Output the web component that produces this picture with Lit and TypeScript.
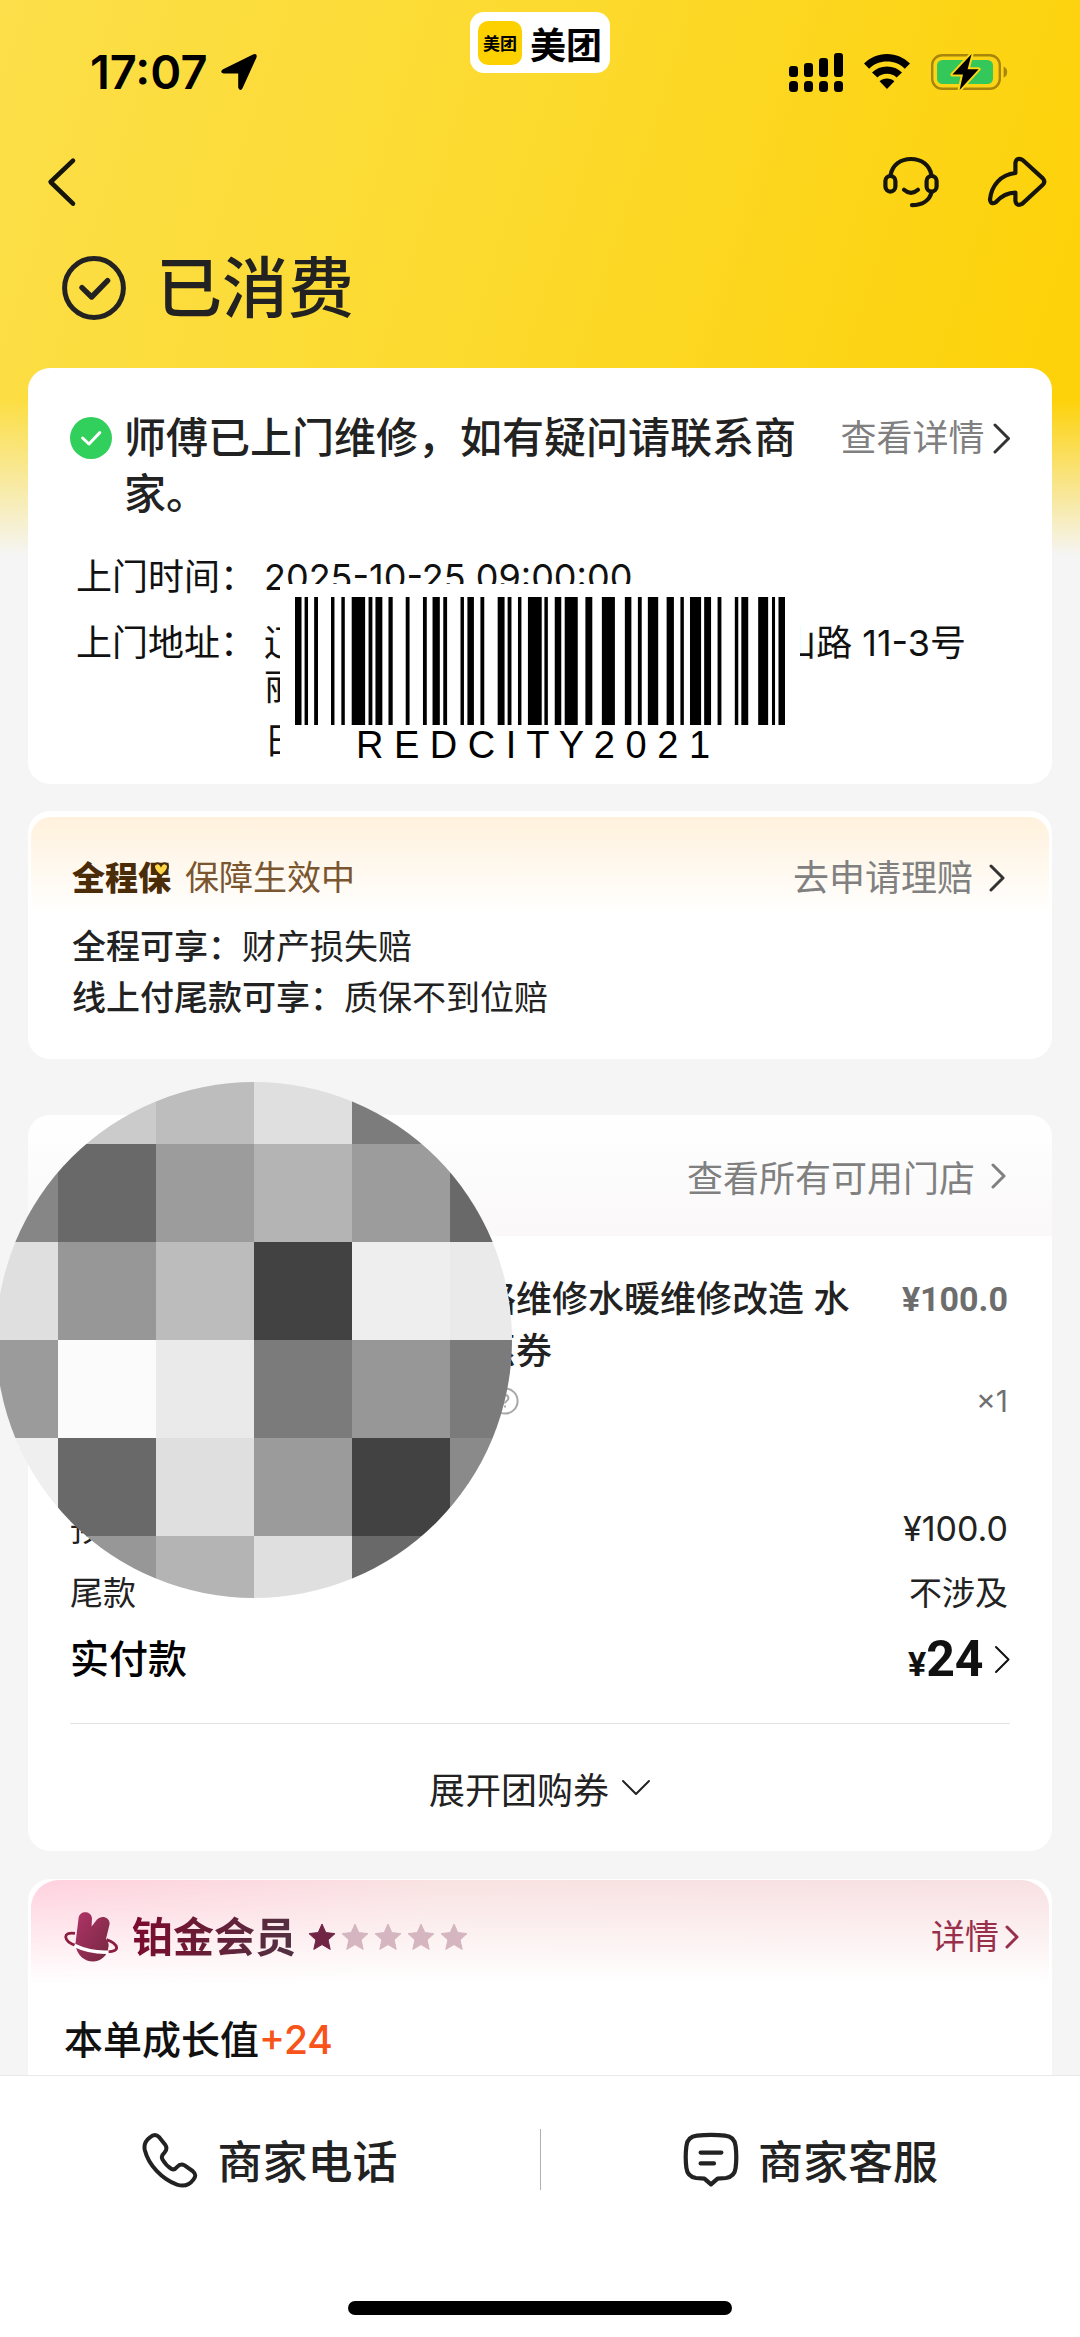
import { LitElement, html, css, svg } from "lit";
import { customElement, property } from "lit/decorators.js";

type Span = [number, number];

/* Start and end of every bar, in barcode units. */
const BARS: Span[] = [
  [0, 17], [25, 34], [50, 60], [94, 103], [121, 130], [148, 183], [192, 202], [210, 228],
  [244, 255], [289, 299], [334, 344], [359, 378], [387, 397], [432, 441], [450, 467], [484, 494],
  [529, 547], [555, 565], [582, 591], [608, 644], [651, 660], [678, 695], [704, 738], [758, 776],
  [801, 835], [861, 878], [895, 905], [921, 948], [970, 989], [1006, 1015], [1031, 1060],
  [1068, 1086], [1103, 1113], [1148, 1157], [1165, 1183], [1209, 1235], [1245, 1253], [1262, 1279],
];

/* Grey tiles of the mosaic disc, row by row. */
const TILES: string[][] = [
  ["#cbcbcb", "#cbcbcb", "#bdbdbd", "#dfdfdf", "#7c7c7c", "#7c7c7c"],
  ["#868686", "#696969", "#9c9c9c", "#b4b4b4", "#9c9c9c", "#696969"],
  ["#dfdfdf", "#979797", "#bcbcbc", "#424242", "#eeeeee", "#eaeaea"],
  ["#9b9b9b", "#fbfbfb", "#eaeaea", "#7b7b7b", "#979797", "#7b7b7b"],
  ["#efefef", "#696969", "#dfdfdf", "#9b9b9b", "#424242", "#8a8a8a"],
  ["#979797", "#979797", "#b4b4b4", "#dfdfdf", "#696969", "#696969"],
];

@customElement("chevron-icon")
export class ChevronIcon extends LitElement {
  @property() dir: "right" | "down" = "right";
  @property({ type: Number }) size = 30;
  @property({ type: Number }) weight = 3;

  static styles = css`
    :host { display: inline-flex; flex: none; }
    svg { display: block; fill: none; stroke: currentColor; stroke-linecap: round; stroke-linejoin: round; }
  `;

  render() {
    const s = this.size;
    const h = s / 2;
    const w = this.weight;
    return this.dir === "right"
      ? html`<svg width=${h + 2} height=${s} viewBox="0 0 ${h + 2} ${s}" stroke-width=${w} aria-hidden="true">
          <path d="M2 2 L${h} ${h} L2 ${s - 2}" /></svg>`
      : html`<svg width=${s} height=${h + 4} viewBox="0 0 ${s} ${h + 4}" stroke-width=${w} aria-hidden="true">
          <path d="M2 3 L${h} ${h + 1} L${s - 2} 3" /></svg>`;
  }
}

@customElement("bar-code")
export class BarCode extends LitElement {
  @property() caption = "";

  static styles = css`
    :host { display: flex; flex-direction: column; align-items: center; background: #fff; }
    svg { display: block; width: 100%; height: 128px; }
    .caption { padding-right: 14px; font: 400 38px/40px "Liberation Sans", Arial, sans-serif; color: #000; white-space: nowrap; }
  `;

  render() {
    return html`
      <svg viewBox="0 0 1279 10" preserveAspectRatio="none" aria-hidden="true">
        ${BARS.map(([a, b]) => svg`<rect x=${a} y="0" width=${b - a} height="10" />`)}
      </svg>
      <span class="caption">${this.caption}</span>
    `;
  }
}

@customElement("mosaic-disc")
export class MosaicDisc extends LitElement {
  static styles = css`
    :host { display: block; }
    svg { display: block; width: 100%; height: 100%; }
  `;

  render() {
    return html`<svg viewBox="0 0 516 516" aria-hidden="true">
      <defs><clipPath id="disc"><circle cx="258" cy="258" r="258" /></clipPath></defs>
      <g clip-path="url(#disc)" shape-rendering="crispEdges">
        ${TILES.map((row, r) =>
          row.map((c, i) => svg`<rect x=${62 + (i - 1) * 98} y=${62 + (r - 1) * 98} width="98" height="98" fill=${c} />`)
        )}
      </g>
    </svg>`;
  }
}

const star = (on: boolean) => html`<svg class="star ${on ? "on" : ""}" viewBox="0 0 28 28" aria-hidden="true">
  <path d="M14 1 L17.8 9.6 L27 10.6 L20.1 16.9 L22.2 26.4 L14 21.6 L5.8 26.4 L7.9 16.9 L1 10.6 L10.2 9.6 Z" />
</svg>`;

@customElement("app-root")
export class AppRoot extends LitElement {
  static styles = css`
    :host {
      display: block;
      font-family: Inter, "Noto Sans CJK SC", sans-serif;
      color: #222;
    }
    * { box-sizing: border-box; }
    h1, h2, p, dl, dd, dt { margin: 0; font-weight: inherit; font-size: inherit; }
    button, a { font: inherit; color: inherit; background: none; border: 0; padding: 0; text-decoration: none; cursor: pointer; }
    svg { display: block; flex: none; }

    .page {
      display: flex;
      flex-direction: column;
      min-height: 100vh;
      background:
        linear-gradient(to bottom, rgba(245, 245, 245, 0) 400px, #f5f5f5 556px),
        linear-gradient(108deg, #fcdf4a 0, #fcda2e 45%, #fdd20a 92%) 0 0 / 100% 560px no-repeat,
        #f5f5f5;
    }

    /* status bar */
    .status { position: relative; display: flex; justify-content: space-between; align-items: center; padding: 44px 72px 0 90px; }
    .clock { display: flex; align-items: center; gap: 12px; font-size: 47px; line-height: 56px; font-weight: 600; color: #000; }
    .signals { display: flex; align-items: center; gap: 20px; }
    .brand {
      position: absolute; top: 12px; left: 50%; transform: translateX(-50%);
      display: flex; align-items: center; gap: 8px;
      height: 61px; padding: 0 8px; border-radius: 14px; background: #fff; color: #000;
      font-weight: 700; font-size: 36px; white-space: nowrap;
    }
    .brand-mark { display: grid; place-items: center; width: 44px; height: 44px; border-radius: 10px; background: #fdd000; font-size: 17px; }

    /* navigation */
    .nav { display: flex; align-items: center; margin-top: 50px; height: 64px; padding: 0 32px 0 46px; color: #16150c; }
    .nav .back { margin-right: auto; }
    .nav-actions { display: flex; align-items: center; gap: 46px; }
    .line { fill: none; stroke: currentColor; stroke-linecap: round; stroke-linejoin: round; }

    .state { display: flex; align-items: center; gap: 30px; margin-top: 34px; padding: 0 62px; font-size: 66px; line-height: 80px; font-weight: 500; }

    /* cards */
    .cards { display: flex; flex-direction: column; flex: 1; padding: 40px 28px 0; }
    .card { position: relative; border-radius: 22px; background: #fff; }
    .link { display: inline-flex; align-items: center; gap: 8px; font-size: 36px; color: #808080; white-space: nowrap; }
    .link.wide { gap: 16px; }
    .dark { color: #333; }

    .visit { padding: 42px 42px 21px; }
    .visit-head { display: flex; align-items: flex-start; gap: 12px; line-height: 56px; }
    .visit-head .ok { margin-top: 7px; }
    .visit-title { flex: 1; font-size: 42px; font-weight: 500; }
    .visit-head .link { margin-left: 16px; line-height: 56px; }
    .facts { display: grid; grid-template-columns: 188px 1fr; row-gap: 22px; margin-top: 33px; padding-left: 6px; font-size: 36px; line-height: 44px; color: #111; }
    .address-line { display: flex; justify-content: space-between; padding-right: 44px; }
    .address-tail { margin-top: 10px; }
    .visit bar-code { position: absolute; left: 252px; top: 216px; width: 520px; padding: 13px 15px 5px; }

    .cover { margin-top: 27px; padding: 6px 3px 36px; }
    .cover-head {
      display: flex; align-items: center; padding: 26px 44px 0 41px; border-radius: 20px 20px 0 0;
      background: linear-gradient(#fff1dc, #fff); line-height: 70px;
    }
    .cover-logo { display: flex; position: relative; font-size: 33px; font-weight: 900; color: #4b2c08; }
    .heart { position: absolute; right: 2px; top: 19px; }
    .cover-state { flex: 1; margin-left: 14px; font-size: 34px; color: #7a5630; }
    .cover-list { padding: 8px 41px 0; font-size: 34px; line-height: 51px; }
    .cover-list b { font-weight: 500; }

    .order { margin-top: 56px; }
    .disc { position: absolute; left: -32px; top: -33px; width: 516px; height: 516px; }
    .order-head { display: flex; justify-content: flex-end; align-items: center; height: 121px; padding: 0 46px; border-radius: 22px 22px 0 0; background: linear-gradient(#fff, #faf8f9); }
    .order-body { padding: 37px 42px 0; }
    .product { display: grid; grid-template-columns: 1fr 530px; }
    .product-info { grid-column: 2; display: grid; grid-template-columns: 1fr auto; row-gap: 4px; padding-right: 2px; }
    .product-name { font-size: 36px; line-height: 52px; font-weight: 500; white-space: nowrap; }
    .product-price { font: 700 34px/52px Roboto, sans-serif; color: #6d6d6d; }
    .help { align-self: center; margin-left: 11px; }
    .count { font-size: 30px; line-height: 40px; color: #707070; text-align: right; }
    .sums { margin-top: 76px; padding-right: 2px; }
    .sum { display: flex; justify-content: space-between; font-size: 33px; line-height: 64px; }
    .sum .money { font-size: 34px; }
    .paid { display: flex; justify-content: space-between; align-items: center; line-height: 68px; font-size: 39px; font-weight: 500; color: #000; }
    .paid-value { display: flex; align-items: center; gap: 10px; color: #111; }
    .paid-amount { font: 700 50px/68px Roboto, sans-serif; }
    .paid-amount small { font-size: 34px; line-height: 1; }
    .expand { display: flex; justify-content: center; align-items: center; gap: 12px; width: 100%; height: 128px; margin-top: 30px; border-top: 1px solid #e2e2e2; font-size: 36px; }

    .member { flex: 1; margin-top: 28px; padding: 1px 3px 5px; border-radius: 22px 22px 0 0; }
    .member-head {
      display: flex; align-items: center; padding: 10px 30px 0 33px; border-radius: 28px 28px 0 0; line-height: 94px;
      background: linear-gradient(to bottom, rgba(255, 255, 255, 0), #fff), linear-gradient(to right, #ffd1de, #f9e2e2 40%, #f8e0e2);
    }
    .member-name {
      margin: 0 12px 0 14px; font-size: 41px; font-weight: 700; color: transparent;
      background: linear-gradient(100deg, #7d0a2c, #4f3444); background-clip: text; -webkit-background-clip: text;
    }
    .stars { display: flex; flex: 1; gap: 5px; }
    .star { width: 28px; height: 28px; fill: #d5b6c0; stroke: #d5b6c0; stroke-linejoin: round; }
    .star.on { fill: #712544; stroke: #712544; }
    .member-link { display: flex; align-items: center; gap: 6px; font-size: 34px; color: #98304c; }
    .growth { margin-top: 26px; padding-left: 33px; font-size: 39px; line-height: 60px; font-weight: 500; color: #111; }
    .growth em { font-style: normal; color: #f8541a; }

    /* contact bar */
    .contact { position: sticky; bottom: 0; padding: 53px 0 22px; background: #fff; border-top: 1px solid #e9e9e9; }
    .contact-row { display: grid; grid-template-columns: 1fr 1fr; }
    .contact-row button { display: flex; justify-content: center; align-items: center; gap: 19px; height: 61px; font-size: 45px; font-weight: 500; }
    .contact-row button + button { border-left: 1px solid #b0b0b0; }
    .home { width: 384px; height: 14px; margin: 111px auto 0; border-radius: 7px; background: #000; }
  `;

  private statusBar() {
    return html`<div class="status">
      <div class="clock">
        <span>17:07</span>
        <svg width="38" height="38" viewBox="0 0 38 38" aria-hidden="true">
          <path d="M33 1.4 Q37.4 0 36.6 4.2 L22.4 35.4 Q19.6 39 18.2 34.6 V20.6 H3.6 Q-0.6 19.4 2.6 16.4 Z" />
        </svg>
      </div>
      <div class="brand"><span class="brand-mark">美团</span><span>美团</span></div>
      <div class="signals">
        <svg width="54" height="39" viewBox="0 0 54 39" aria-hidden="true">
          <rect x="0" y="13" width="9" height="11" rx="3" /><rect x="15" y="10" width="9" height="14" rx="3" />
          <rect x="30" y="5" width="9" height="19" rx="3" /><rect x="45" y="0" width="9" height="24" rx="3" />
          <rect x="0" y="28" width="9" height="11" rx="3.5" /><rect x="15" y="28" width="9" height="11" rx="3.5" />
          <rect x="30" y="28" width="9" height="11" rx="3.5" /><rect x="45" y="28" width="9" height="11" rx="3.5" />
        </svg>
        <svg width="48" height="36" viewBox="0 0 48 36" aria-hidden="true">
          <path d="M24 0 C33 0 41 3.6 47 9.6 L41.8 14.8 C37 10 31 7.6 24 7.6 S11 10 6.2 14.8 L1 9.6 C7 3.6 15 0 24 0 Z" />
          <path d="M24 12.4 C30 12.4 35 14.6 39 18.4 L33.6 23.6 C31 21 28 19.8 24 19.8 S17 21 14.4 23.6 L9 18.4 C13 14.6 18 12.4 24 12.4 Z" />
          <path d="M24 24.4 C27 24.4 29.4 25.4 31.4 27.2 L24 35 L16.6 27.2 C18.6 25.4 21 24.4 24 24.4 Z" />
        </svg>
        <svg width="77" height="38" viewBox="0 0 77 38" aria-hidden="true">
          <rect x="1.2" y="2.2" width="67.6" height="33.6" rx="10" fill="none" stroke="#a8860c" stroke-width="2.4" />
          <path d="M72.6 13.4 C77.4 15 77.4 23 72.6 24.6 Z" fill="#a8860c" />
          <rect x="6" y="7" width="56" height="24" rx="5.5" fill="#34c759" />
          <path d="M40.6 1 L21.4 21.6 H32 L28.6 37 L47.6 16.2 H36.6 Z" fill="#000" stroke="#fdd615" stroke-width="4" stroke-linejoin="round" paint-order="stroke" />
        </svg>
      </div>
    </div>`;
  }

  private navBar() {
    return html`<nav class="nav">
      <button class="back" aria-label="返回">
        <svg class="line" width="32" height="52" viewBox="0 0 32 52" stroke-width="4.6"><path d="M27 4.6 L4.6 26 L27 47.6" /></svg>
      </button>
      <div class="nav-actions">
        <button aria-label="客服">
          <svg class="line" width="58" height="54" viewBox="0 0 58 54" stroke-width="4.2">
            <path d="M8.6 20 C10.4 9.6 18.8 4 29 4 S47.6 9.6 49.4 20" />
            <rect x="3.4" y="21" width="10" height="15.6" rx="5" /><rect x="44.6" y="21" width="10" height="15.6" rx="5" />
            <path d="M49.6 37 C47.6 45.6 40 50.2 30 50.2" /><path d="M22 34.8 Q29 41 36 34.8" />
          </svg>
        </button>
        <button aria-label="分享">
          <svg class="line" width="62" height="54" viewBox="0 0 62 54" stroke-width="4.2">
            <path d="M29.4 18 V8 Q30.4 1.8 36.4 4.8 L56.8 23.4 Q59.8 26.6 56.8 29.8 L36.4 48.6 Q30.6 52 29.4 45.8 V37.6 C21 37.6 15 41.4 10 47 Q5 50.4 4 44.6 C5.4 30.4 14.6 19.6 29.4 18 Z" />
          </svg>
        </button>
      </div>
    </nav>`;
  }

  private visitCard() {
    return html`<section class="card visit">
      <div class="visit-head">
        <svg class="ok" width="42" height="42" viewBox="0 0 42 42" aria-hidden="true">
          <circle cx="21" cy="21" r="21" fill="#31cf5b" />
          <path d="M12.6 21 L19 27 L29.8 15.6" fill="none" stroke="#fff" stroke-width="3" stroke-linecap="round" stroke-linejoin="round" />
        </svg>
        <h2 class="visit-title">师傅已上门维修，如有疑问请联系商家。</h2>
        <a class="link" href="#detail">查看详情<chevron-icon class="dark" size="31"></chevron-icon></a>
      </div>
      <dl class="facts">
        <dt>上门时间：</dt>
        <dd>2025-10-25 09:00:00</dd>
        <dt>上门地址：</dt>
        <dd>
          <div class="address-line"><span>辽</span><span>山路 11-3号</span></div>
          <div>丽</div>
          <div class="address-tail">日</div>
        </dd>
      </dl>
      <bar-code caption="R E D C I T Y 2 0 2 1"></bar-code>
    </section>`;
  }

  private coverCard() {
    return html`<section class="card cover">
      <div class="cover-head">
        <span class="cover-logo">全程保
          <svg class="heart" width="16" height="15" viewBox="0 0 16 15" aria-hidden="true">
            <path d="M8 14 C2 9.6 1 7 1 4.6 C1 1 6 0 8 3.6 C10 0 15 1 15 4.6 C15 7 14 9.6 8 14 Z" fill="#ffd84a" stroke="#4b2c08" stroke-width="2" />
          </svg>
        </span>
        <span class="cover-state">保障生效中</span>
        <a class="link wide" href="#claim">去申请理赔<chevron-icon class="dark" size="28"></chevron-icon></a>
      </div>
      <div class="cover-list">
        <p><b>全程可享：</b>财产损失赔</p>
        <p><b>线上付尾款可享：</b>质保不到位赔</p>
      </div>
    </section>`;
  }

  private orderCard() {
    return html`<section class="card order">
      <div class="order-head">
        <a class="link wide" href="#stores">查看所有可用门店<chevron-icon size="26"></chevron-icon></a>
      </div>
      <div class="order-body">
        <div class="product">
          <div class="product-info">
            <h2 class="product-name">路维修水暖维修改造 水<br />惠券</h2>
            <span class="product-price">¥100.0</span>
            <svg class="help" width="28" height="28" viewBox="0 0 28 28" fill="none" stroke="#a8a8a8" stroke-width="2" aria-hidden="true">
              <circle cx="14" cy="14" r="12.6" />
              <path d="M10.6 11.4 C10.6 7 17.4 7 17.4 11.4 C17.4 13.8 14 13.8 14 16.6 M14 18.6 V20.6" />
            </svg>
            <span class="count">×1</span>
          </div>
        </div>
        <div class="sums">
          <div class="sum"><span>预</span><span class="money">¥100.0</span></div>
          <div class="sum"><span>尾款</span><span>不涉及</span></div>
        </div>
        <div class="paid">
          <span>实付款</span>
          <span class="paid-value"><span class="paid-amount"><small>¥</small>24</span><chevron-icon size="29" weight="2"></chevron-icon></span>
        </div>
        <button class="expand">展开团购券<chevron-icon dir="down" size="30" weight="2"></chevron-icon></button>
      </div>
      <mosaic-disc class="disc"></mosaic-disc>
    </section>`;
  }

  private memberCard() {
    return html`<section class="card member">
      <div class="member-head">
        <svg width="54" height="52" viewBox="0 0 54 52" aria-hidden="true">
          <defs><linearGradient id="plum" x1="0" y1="0" x2="1" y2="1"><stop offset="0" stop-color="#b03468" /><stop offset="1" stop-color="#73273f" /></linearGradient></defs>
          <path d="M11.4 33 L14.6 7 C15.6 -1 27 -0.6 28 7 L27.6 15.6 L33 8.6 C38 3 47 7 45.4 14 L42 28 Q45 31 44.6 35 C43 56 14 56 11.4 33 Z" fill="url(#plum)" />
          <path d="M11 22.4 C-2 20.4 -1 30 12 34.6 M43.4 40.8 C57 41 54.6 33 42.6 28.6" fill="none" stroke="#8c1f40" stroke-width="2.8" />
          <path d="M10.4 34.4 C21 39.4 33 41.8 44.6 41.2" fill="none" stroke="#fff" stroke-width="3.4" />
        </svg>
        <span class="member-name">铂金会员</span>
        <span class="stars">${[1, 0, 0, 0, 0].map((n) => star(n === 1))}</span>
        <a class="member-link" href="#member">详情<chevron-icon size="24" weight="3"></chevron-icon></a>
      </div>
      <p class="growth">本单成长值<em>+24</em></p>
    </section>`;
  }

  private contactBar() {
    return html`<footer class="contact">
      <div class="contact-row">
        <button>
          <svg class="line" width="56" height="56" viewBox="0 0 56 56" stroke-width="4">
            <path d="M8 5.4 Q13 0.6 17.4 5.4 L23 12.4 Q26 16.6 22.6 20.4 Q18.4 24 20.6 27.6 C23 32 26.4 35 29.6 37 Q32.4 38.4 35 35 Q38.6 31 42.6 33.4 L50.6 39 Q55.4 43 51.4 47.6 C47 53.6 41 54.6 35 52.6 C20 47 6.4 33 2.8 18 C1.6 12.4 4.4 8 8 5.4 Z" />
          </svg>
          商家电话
        </button>
        <button>
          <svg class="line" width="56" height="56" viewBox="0 0 56 56" stroke-width="4.2">
            <path d="M14 3.6 Q28 2 42 3.6 Q51.6 4.6 52.6 14 Q54 25 52.6 36 Q51.6 44.6 43 46 L34.6 46.6 L28 52.4 L21.4 46.6 L13 46 Q4.4 44.6 3.4 36 Q2 25 3.4 14 Q4.4 4.6 14 3.6 Z" />
            <path d="M17.6 20.6 H38.4 M17.6 31.4 H31" />
          </svg>
          商家客服
        </button>
      </div>
      <div class="home"></div>
    </footer>`;
  }

  render() {
    return html`<div class="page">
      ${this.statusBar()} ${this.navBar()}
      <h1 class="state">
        <svg class="line" width="64" height="64" viewBox="0 0 64 64" stroke-width="5" aria-hidden="true">
          <circle cx="32" cy="32" r="29.4" /><path d="M20 31.6 L29.6 41 L45.6 24.6" stroke-width="5.4" />
        </svg>
        已消费
      </h1>
      <main class="cards">
        ${this.visitCard()} ${this.coverCard()} ${this.orderCard()} ${this.memberCard()}
      </main>
      ${this.contactBar()}
    </div>`;
  }
}
